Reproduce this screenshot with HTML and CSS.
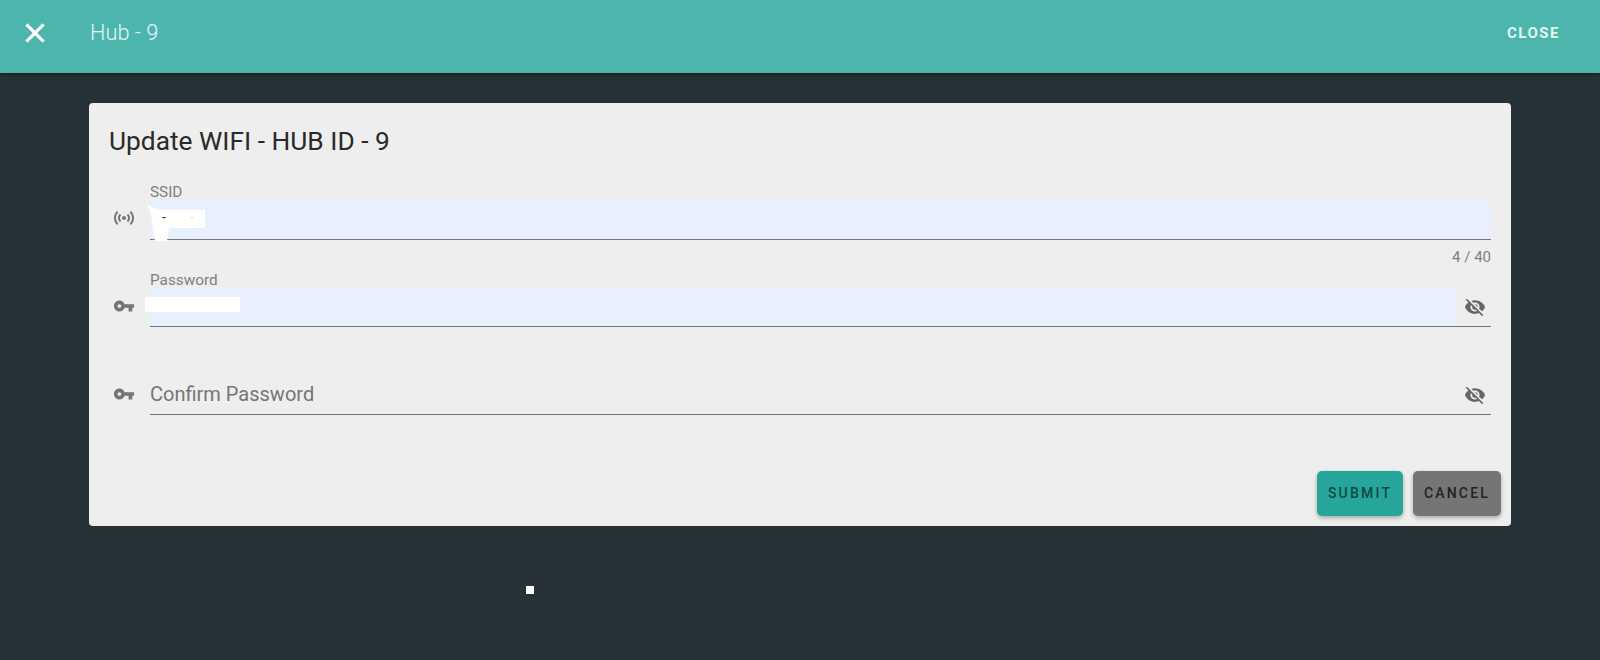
FILE: index.html
```html
<!DOCTYPE html>
<html>
<head>
    <title>Hub - 9</title>
    <link rel="stylesheet" href="styles.css">
</head>
<body>

<header class="toolbar">
    <button class="icon-btn" type="button">
        <svg width="32" height="32" viewBox="0 0 24 24"><path d="M19 6.41L17.59 5 12 10.59 6.41 5 5 6.41 10.59 12 5 17.59 6.41 19 12 13.41 17.59 19 19 17.59 13.41 12z"/></svg>
    </button>
    <div class="toolbar-title">Hub - 9</div>
    <button class="close-btn" type="button">CLOSE</button>
</header>

<main class="card">
    <h2>Update WIFI - HUB ID - 9</h2>

    <div class="field-row">
        <svg class="field-icon" viewBox="0 0 24 24"><path d="M4.93,4.93C3.12,6.74 2,9.24 2,12C2,14.76 3.12,17.26 4.93,19.07L6.34,17.66C4.89,16.22 4,14.22 4,12C4,9.79 4.89,7.78 6.34,6.34L4.93,4.93M19.07,4.93L17.66,6.34C19.11,7.78 20,9.79 20,12C20,14.22 19.11,16.22 17.66,17.66L19.07,19.07C20.88,17.26 22,14.76 22,12C22,9.24 20.88,6.74 19.07,4.93M7.76,7.76C6.67,8.85 6,10.35 6,12C6,13.65 6.67,15.15 7.76,16.24L9.17,14.83C8.45,14.11 8,13.11 8,12C8,10.89 8.45,9.89 9.17,9.17L7.76,7.76M16.24,7.76L14.83,9.17C15.55,9.89 16,10.89 16,12C16,13.11 15.55,14.11 14.83,14.83L16.24,16.24C17.33,15.15 18,13.65 18,12C18,10.35 17.33,8.85 16.24,7.76M12,10A2,2 0 0,0 10,12A2,2 0 0,0 12,14A2,2 0 0,0 14,12A2,2 0 0,0 12,10Z"/></svg>
        <div class="field">
            <label for="ssid">SSID</label>
            <div class="control">
                <input class="autofilled" type="text" id="ssid">
                <svg class="redact-ssid" width="58" height="37" viewBox="0 0 58 37"><path d="M0 0L6 4L14 6H58V24H22L20 37H8L6 24L4 10Z"/></svg>
                <span class="ssid-dash">-</span>
                <span class="ssid-dash faint">-</span>
            </div>
            <div class="counter">4 / 40</div>
        </div>
    </div>

    <div class="field-row">
        <svg class="field-icon key-icon" viewBox="0 0 24 24"><path d="M12.65 10C11.83 7.67 9.61 6 7 6c-3.31 0-6 2.69-6 6s2.69 6 6 6c2.61 0 4.83-1.67 5.65-4H17v4h4v-4h2v-4H12.65zM7 14c-1.1 0-2-.9-2-2s.9-2 2-2 2 .9 2 2-.9 2-2 2z"/></svg>
        <div class="field">
            <label for="password">Password</label>
            <div class="control short">
                <input class="autofilled" type="text" id="password">
                <svg class="eye" viewBox="0 0 24 24"><path d="M11.83,9L15,12.16C15,12.11 15,12.05 15,12A3,3 0 0,0 12,9C11.94,9 11.89,9 11.83,9M7.53,9.8L9.08,11.35C9.03,11.56 9,11.77 9,12A3,3 0 0,0 12,15C12.22,15 12.44,14.97 12.65,14.92L14.2,16.47C13.53,16.8 12.79,17 12,17A5,5 0 0,1 7,12C7,11.21 7.2,10.47 7.53,9.8M2,4.27L4.28,6.55L4.73,7C3.08,8.3 1.78,10 1,12C2.73,16.39 7,19.5 12,19.5C13.55,19.5 15.03,19.2 16.38,18.66L16.81,19.08L19.73,22L21,20.73L3.27,3M12,7A5,5 0 0,1 17,12C17,12.64 16.87,13.26 16.64,13.82L19.57,16.75C21.07,15.5 22.27,13.86 23,12C21.27,7.61 17,4.5 12,4.5C10.6,4.5 9.26,4.75 8,5.2L10.17,7.35C10.74,7.13 11.35,7 12,7Z"/></svg>
                <div class="redact-password"></div>
            </div>
        </div>
    </div>

    <div class="field-row">
        <svg class="field-icon key-icon" viewBox="0 0 24 24"><path d="M12.65 10C11.83 7.67 9.61 6 7 6c-3.31 0-6 2.69-6 6s2.69 6 6 6c2.61 0 4.83-1.67 5.65-4H17v4h4v-4h2v-4H12.65zM7 14c-1.1 0-2-.9-2-2s.9-2 2-2 2 .9 2 2-.9 2-2 2z"/></svg>
        <div class="field no-label">
            <div class="control short">
                <input type="text" id="confirm" placeholder="Confirm Password">
                <svg class="eye" viewBox="0 0 24 24"><path d="M11.83,9L15,12.16C15,12.11 15,12.05 15,12A3,3 0 0,0 12,9C11.94,9 11.89,9 11.83,9M7.53,9.8L9.08,11.35C9.03,11.56 9,11.77 9,12A3,3 0 0,0 12,15C12.22,15 12.44,14.97 12.65,14.92L14.2,16.47C13.53,16.8 12.79,17 12,17A5,5 0 0,1 7,12C7,11.21 7.2,10.47 7.53,9.8M2,4.27L4.28,6.55L4.73,7C3.08,8.3 1.78,10 1,12C2.73,16.39 7,19.5 12,19.5C13.55,19.5 15.03,19.2 16.38,18.66L16.81,19.08L19.73,22L21,20.73L3.27,3M12,7A5,5 0 0,1 17,12C17,12.64 16.87,13.26 16.64,13.82L19.57,16.75C21.07,15.5 22.27,13.86 23,12C21.27,7.61 17,4.5 12,4.5C10.6,4.5 9.26,4.75 8,5.2L10.17,7.35C10.74,7.13 11.35,7 12,7Z"/></svg>
            </div>
        </div>
    </div>

    <div class="actions">
        <button class="btn btn-submit" type="button">SUBMIT</button>
        <button class="btn btn-cancel" type="button">CANCEL</button>
    </div>
</main>

<div class="cursor-dot"></div>

</body>
</html>
```

FILE: styles.css
```css
body {
    margin: 0;
    height: 660px;
    overflow: hidden;
    position: relative;
    background: #263238;
    font-family: Roboto, "Liberation Sans", sans-serif;
}
.toolbar {
    height: 73px;
    box-sizing: border-box;
    display: flex;
    align-items: center;
    padding: 0 40px 8px 19px;
    background: #4db6ac;
    color: white;
    box-shadow: 0 2px 4px rgba(0,0,0,0.35);
}
.icon-btn {
    width: 32px;
    height: 32px;
    padding: 0;
    border: none;
    background: none;
}
.icon-btn svg {
    display: block;
    fill: white;
    stroke: white;
    stroke-width: 0.5;
}
.toolbar-title {
    margin-left: 39px;
    font-size: 21.8px;
    font-weight: 300;
    color: #e0f7f4;
    flex: 1;
}
.close-btn {
    padding: 0;
    border: none;
    background: none;
    color: #e0f7f4;
    font-family: inherit;
    font-size: 15px;
    font-weight: 700;
    letter-spacing: 1.5px;
}
.card {
    width: 1422px;
    height: 423px;
    box-sizing: border-box;
    margin: 30px 0 0 89px;
    padding: 20px 20px 0;
    position: relative;
    background: #eeeeee;
    border-radius: 4px;
    color: #212121;
}
h2 {
    margin: 0 0 24px;
    font-size: 26.3px;
    font-weight: 400;
    line-height: 36px;
    color: #2a2a2a;
}
.field-row {
    display: flex;
    align-items: flex-start;
    gap: 14px;
    height: 88px;
    margin-left: 3px;
}
.field-icon {
    width: 24px;
    height: 24px;
    flex: none;
    margin-top: 23px;
    fill: #757575;
}
.key-icon {
    width: 22px;
    height: 22px;
    margin: 24px 1px 0;
}
.field {
    flex: 1;
    min-width: 0;
}
.no-label {
    padding-top: 16px;
}
label {
    display: block;
    height: 16px;
    font-size: 15.3px;
    line-height: 18px;
    color: #808080;
}
.control {
    display: flex;
    align-items: center;
    position: relative;
    height: 40px;
    border-bottom: 1px solid #757575;
}
.short {
    height: 39px;
}
input {
    flex: 1;
    min-width: 0;
    height: 100%;
    box-sizing: border-box;
    padding: 0 0 1px;
    border: none;
    outline: none;
    background: none;
    font-family: inherit;
    font-size: 20px;
    color: #212121;
}
input::placeholder {
    color: #757575;
    opacity: 1;
}
.autofilled {
    background: #e8f0fe;
}
.eye {
    width: 22px;
    height: 22px;
    flex: none;
    margin: 0 5px 0 8px;
    fill: #666666;
}
.counter {
    height: 20px;
    margin-top: 7px;
    text-align: right;
    font-size: 15px;
    line-height: 20px;
    color: #808080;
}
.redact-ssid {
    position: absolute;
    left: -3px;
    top: 5px;
    fill: white;
}
.ssid-dash {
    position: absolute;
    left: 12px;
    top: 10px;
    font-size: 14px;
    color: #333333;
}
.faint {
    left: 40px;
    color: #dddddd;
}
.redact-password {
    position: absolute;
    left: -5px;
    top: 10px;
    width: 95px;
    height: 15px;
    background: white;
}
.actions {
    position: absolute;
    right: 10px;
    bottom: 10px;
    display: flex;
    gap: 10px;
}
.btn {
    height: 45px;
    padding: 0 0 2px;
    border: none;
    border-radius: 5px;
    font-family: inherit;
    font-size: 14px;
    font-weight: 500;
    letter-spacing: 2.2px;
    box-shadow: 0 2px 4px rgba(0,0,0,0.3);
}
.btn-submit {
    width: 86px;
    background: #26a69a;
    color: #0b4a44;
}
.btn-cancel {
    width: 88px;
    background: #757575;
    color: #222222;
}
.cursor-dot {
    position: absolute;
    left: 526px;
    top: 586px;
    width: 8px;
    height: 8px;
    background: white;
}
```
